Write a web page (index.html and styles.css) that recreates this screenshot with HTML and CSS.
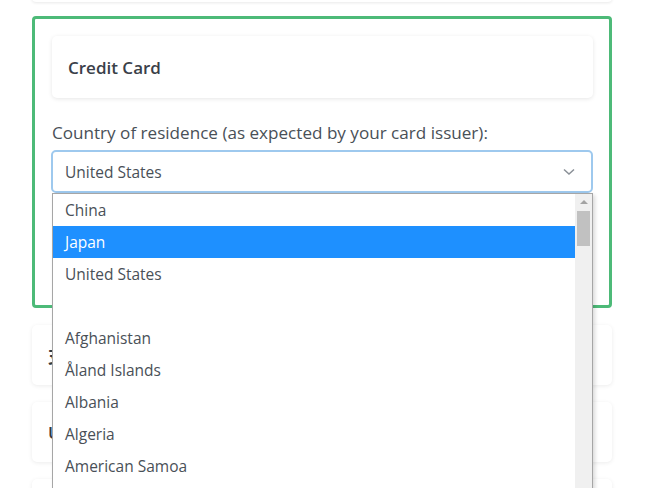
FILE: index.html
```
<!DOCTYPE html>
<html>
<head>
<meta charset="utf-8">
<link rel="stylesheet" href="styles.css">
</head>
<body>
<div class="page">
  <div class="top-card"></div>
  <div class="method selected">
    <div class="method-head">Credit Card</div>
    <div class="field">
      <label class="field-label">Country of residence (as expected by your card issuer):</label>
      <div class="select-wrap">
        <div class="select">
          <span>United States</span>
          <svg class="chev" width="12" height="8" viewBox="0 0 12 8"><path d="M1 1.5 L6 6 L11 1.5" fill="none" stroke="#8a9097" stroke-width="1.5"/></svg>
        </div>
        <div class="dropdown">
          <ul class="options">
            <li>China</li>
            <li class="hl">Japan</li>
            <li>United States</li>
            <li class="blank"></li>
            <li>Afghanistan</li>
            <li>Åland Islands</li>
            <li>Albania</li>
            <li>Algeria</li>
            <li>American Samoa</li>
          </ul>
          <div class="scrollbar">
            <div class="arrow-up"></div>
            <div class="thumb"></div>
          </div>
        </div>
      </div>
    </div>
  </div>
  <div class="method"><span class="method-title">支付宝</span></div>
  <div class="method"><span class="method-title">UnionPay</span></div>
  <div class="method"></div>
</div>
</body>
</html>
```
FILE: styles.css
```
html, body {
  margin: 0;
  padding: 0;
  background: #fff;
  overflow: hidden;
}
body {
  font-family: "Open Sans", "Noto Sans", "Noto Sans CJK SC", sans-serif;
  color: #495057;
}
.page {
  width: 580px;
  margin-left: 32px;
  display: flex;
  flex-direction: column;
  gap: 17px;
}
.top-card {
  height: 2px;
  margin-top: -10px;
  padding-top: 10px;
  border-radius: 4px;
  background: #fff;
  box-shadow: 0 1px 3px rgba(0,0,0,0.09);
  margin-bottom: -3px;
}
.method {
  background: #fff;
  border-radius: 5px;
  box-shadow: 0 1px 4px rgba(0,0,0,0.08);
  height: 60px;
  display: flex;
  align-items: center;
  padding: 0 16px;
  box-sizing: border-box;
}
.method-title {
  font-size: 17px;
  font-weight: 600;
  color: #343a40;
}
.method.selected {
  display: block;
  height: 292px;
  border: 3px solid #4dba78;
  border-radius: 4px;
  padding: 17px 16px 0 17px;
  box-shadow: none;
}
.method-head {
  height: 62px;
  box-sizing: border-box;
  border-radius: 5px;
  box-shadow: 0 1px 4px rgba(0,0,0,0.1);
  display: flex;
  align-items: center;
  padding-left: 16px;
  font-size: 17px;
  font-weight: 600;
  color: #3a4049;
}
.field {
  margin-top: 22px;
}
.field-label {
  display: block;
  font-size: 17.1px;
  color: #495057;
  line-height: 26px;
}
.select-wrap {
  position: relative;
  margin-top: 4px;
}
.select {
  height: 43px;
  box-sizing: border-box;
  border: 2px solid #9ec9ee;
  border-radius: 5px;
  display: flex;
  align-items: center;
  justify-content: space-between;
  padding: 0 16px 0 12px;
  font-size: 15.5px;
  color: #495057;
  margin-left: -1px;
}
.chev { margin-top: 0; }
.dropdown {
  position: absolute;
  top: 43px;
  left: 0;
  width: 541px;
  height: 300px;
  box-sizing: border-box;
  background: #fff;
  border: 1px solid #a6a6a6;
  box-shadow: 2px 2px 4px rgba(0,0,0,0.15);
  display: flex;
  z-index: 5;
}
.options {
  list-style: none;
  margin: 0;
  padding: 0;
  flex: 1;
}
.options li {
  height: 32px;
  line-height: 32px;
  padding-left: 12px;
  font-size: 15.5px;
  color: #495057;
}
.options li.hl {
  background: #1e90ff;
  color: #fff;
}
.scrollbar {
  width: 17px;
  background: #f0f0f0;
  position: relative;
}
.arrow-up {
  width: 0;
  height: 0;
  margin: 6px auto 0;
  border-left: 4px solid transparent;
  border-right: 4px solid transparent;
  border-bottom: 4px solid #a3a3a3;
}
.thumb {
  margin: 7px 2px 0;
  height: 35px;
  background: #c1c1c1;
}
```
